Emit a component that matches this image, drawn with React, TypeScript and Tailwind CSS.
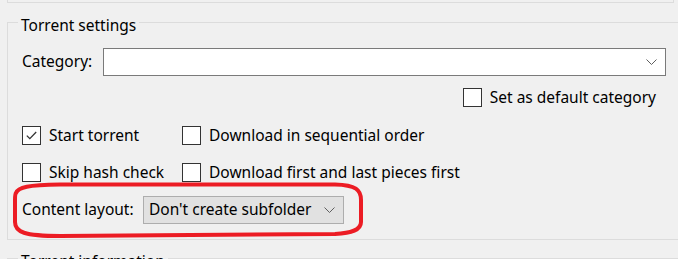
import React from "react";

const FONT = "font-['Noto_Sans',sans-serif]";

function Chevron() {
  return (
    <svg width="11" height="6" viewBox="0 0 11 6" className="shrink-0">
      <polyline points="0.5,0.5 5.5,5.5 10.5,0.5" fill="none" stroke="#5f5f5f" strokeWidth="1" />
    </svg>
  );
}

function CheckBox({ checked, label }: { checked?: boolean; label: string }) {
  return (
    <label className="flex items-center gap-[8px] h-[19px]">
      <span className="w-[19px] h-[19px] shrink-0 border border-[#333333] bg-white flex items-center justify-center">
        {checked && (
          <svg width="11" height="9" viewBox="0 0 11 9">
            <polyline points="0.8,4.6 3.8,7.6 10.2,1" fill="none" stroke="#333333" strokeWidth="1.3" />
          </svg>
        )}
      </span>
      <span className="whitespace-nowrap">{label}</span>
    </label>
  );
}

export default function App() {
  return (
    <div className={`relative w-[678px] h-[259px] overflow-hidden bg-[#f0f0f0] text-black text-[15.5px] ${FONT}`}>
      {/* bottom edge of the previous group */}
      <div className="ml-[7px] w-[667px] h-[3px] border-l border-r border-b border-[#dcdcdc]" />

      <fieldset className="ml-[7px] mt-[6px] w-[690px] border border-[#dcdcdc] pl-[14px] pb-[15px]">
        <legend className="-ml-[4px] px-[3px] pt-[6px] leading-[20px]">Torrent settings</legend>

        <div className="mt-[13px] flex items-center h-[28px]">
          <span className="w-[81px] shrink-0">Category:</span>
          <div className="w-[563px] h-[28px] bg-white border border-[#7a7a7a] flex items-center justify-end pr-[8px]">
            <Chevron />
          </div>
        </div>

        <div className="mt-[12px] w-[644px] flex justify-end pr-[10px]">
          <CheckBox label="Set as default category" />
        </div>

        <div className="mt-[19px] grid grid-cols-[160px_1fr] gap-y-[18px]">
          <CheckBox checked label="Start torrent" />
          <CheckBox label="Download in sequential order" />
          <CheckBox label="Skip hash check" />
          <CheckBox label="Download first and last pieces first" />
        </div>

        <div className="mt-[14px] flex items-center h-[28px]">
          <span className="w-[121px] shrink-0">Content layout:</span>
          <div className="w-[201px] h-[28px] bg-[#e1e1e1] border border-[#adadad] flex items-center justify-between pl-[5px] pr-[8px]">
            <span className="whitespace-nowrap">Don't create subfolder</span>
            <Chevron />
          </div>
        </div>
      </fieldset>

      <fieldset className="ml-[7px] mt-[5px] w-[690px] h-[60px] border border-[#dcdcdc] pl-[14px]">
        <legend className="-ml-[4px] px-[3px] pt-[6px] leading-[20px]">Torrent information</legend>
      </fieldset>

      {/* red hand-drawn highlight */}
      <svg className="absolute left-0 top-0 pointer-events-none" width="678" height="259" viewBox="0 0 678 259">
        <path
          d="M16 193 C18 187 28 185 60 184.5 L335 184.5 C356 185 361 190 361 200 L361 222 C361 230 352 233 335 234 L60 236 C24 236 15 232 15 222 L15 200 C15 196 15 194 16 193 Z"
          fill="none"
          stroke="#ec1c24"
          strokeWidth="4"
        />
      </svg>
    </div>
  );
}
